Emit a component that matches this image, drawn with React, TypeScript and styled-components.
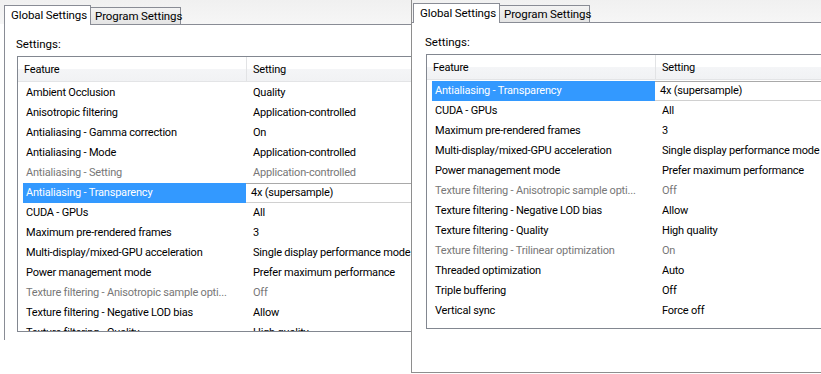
import styled, { createGlobalStyle } from "styled-components"

type SettingRow = {
  feature: string
  value: string
  disabled?: boolean
  selected?: boolean
}

const leftRows: SettingRow[] = [
  { feature: "Ambient Occlusion", value: "Quality" },
  { feature: "Anisotropic filtering", value: "Application-controlled" },
  { feature: "Antialiasing - Gamma correction", value: "On" },
  { feature: "Antialiasing - Mode", value: "Application-controlled" },
  { feature: "Antialiasing - Setting", value: "Application-controlled", disabled: true },
  { feature: "Antialiasing - Transparency", value: "4x (supersample)", selected: true },
  { feature: "CUDA - GPUs", value: "All" },
  { feature: "Maximum pre-rendered frames", value: "3" },
  { feature: "Multi-display/mixed-GPU acceleration", value: "Single display performance mode" },
  { feature: "Power management mode", value: "Prefer maximum performance" },
  { feature: "Texture filtering - Anisotropic sample opti...", value: "Off", disabled: true },
  { feature: "Texture filtering - Negative LOD bias", value: "Allow" },
  { feature: "Texture filtering - Quality", value: "High quality" },
]

const rightRows: SettingRow[] = [
  { feature: "Antialiasing - Transparency", value: "4x (supersample)", selected: true },
  { feature: "CUDA - GPUs", value: "All" },
  { feature: "Maximum pre-rendered frames", value: "3" },
  { feature: "Multi-display/mixed-GPU acceleration", value: "Single display performance mode" },
  { feature: "Power management mode", value: "Prefer maximum performance" },
  { feature: "Texture filtering - Anisotropic sample opti...", value: "Off", disabled: true },
  { feature: "Texture filtering - Negative LOD bias", value: "Allow" },
  { feature: "Texture filtering - Quality", value: "High quality" },
  { feature: "Texture filtering - Trilinear optimization", value: "On", disabled: true },
  { feature: "Threaded optimization", value: "Auto" },
  { feature: "Triple buffering", value: "Off" },
  { feature: "Vertical sync", value: "Force off" },
]

type SettingsWindowProps = {
  rows: SettingRow[]
  framed?: boolean
  left: number
  top: number
  width: number
  height: number
  listHeight: number
}

const SettingsWindow = ({ rows, framed, left, top, width, height, listHeight }: SettingsWindowProps) => (
  <Window $framed={framed} style={{ left, top, width, height }}>
    <TabStrip $framed={framed}>
      <Tab $active>Global Settings</Tab>
      <Tab>Program Settings</Tab>
    </TabStrip>
    <Panel $framed={framed}>
      <Label>Settings:</Label>
      <ListBox style={{ height: listHeight }}>
        <Header>
          <HeadCell $first>Feature</HeadCell>
          <HeadCell>Setting</HeadCell>
        </Header>
        {rows.map(row => (
          <Row key={row.feature}>
            <FeatureCell $selected={row.selected} $disabled={row.disabled}>
              {row.feature}
            </FeatureCell>
            <ValueCell $selected={row.selected} $disabled={row.disabled}>
              {row.value}
            </ValueCell>
          </Row>
        ))}
      </ListBox>
    </Panel>
  </Window>
)

const App = () => (
  <>
    <GlobalStyle />
    <Desktop>
      <SettingsWindow rows={leftRows} left={0} top={0} width={411} height={340} listHeight={276} />
      <SettingsWindow rows={rightRows} framed left={411} top={-2} width={420} height={375} listHeight={275} />
    </Desktop>
  </>
)
export default App

const GlobalStyle = createGlobalStyle`
  body {
    margin: 0;
    background: #fff;
    font-family: Roboto, "Noto Sans", "Liberation Sans", sans-serif;
    font-size: 11px;
    color: #000;
  }
`

const Desktop = styled.div`
  position: relative;
  width: 821px;
  height: 374px;
  overflow: hidden;
  background: #fff;
`

/* each screenshot is a window lying on the canvas */
const Window = styled.div<{ $framed?: boolean }>`
  position: absolute;
  box-sizing: border-box;
  display: flex;
  flex-direction: column;
  overflow: hidden;
  background: #fff;
  border-left: ${p => (p.$framed ? "1px solid #8e8e8e" : "none")};
  border-bottom: ${p => (p.$framed ? "1px solid #8e8e8e" : "none")};
`

const TabStrip = styled.div<{ $framed?: boolean }>`
  height: 24px;
  flex: 0 0 24px;
  display: flex;
  align-items: flex-end;
  padding-left: ${p => (p.$framed ? "1px" : "4px")};
  background: linear-gradient(to bottom, #f0f0f0, #f6f6f6);
`

const Tab = styled.div<{ $active?: boolean }>`
  box-sizing: border-box;
  position: relative;
  z-index: ${p => (p.$active ? 2 : 1)};
  width: ${p => (p.$active ? "87px" : "91px")};
  height: ${p => (p.$active ? "20px" : "17px")};
  margin-bottom: ${p => (p.$active ? "-1px" : "0")};
  margin-left: ${p => (p.$active ? "0" : "-1px")};
  padding-left: ${p => (p.$active ? "6px" : "4px")};
  padding-top: ${p => (p.$active ? "1px" : "0")};
  border: 1px solid #898c95;
  border-bottom: none;
  line-height: 16px;
  font-size: 11.5px;
  letter-spacing: -0.1px;
  white-space: nowrap;
  background: ${p =>
    p.$active ? "#fff" : "linear-gradient(to bottom, #f3f3f3, #e4e4e4)"};
`

const Panel = styled.div<{ $framed?: boolean }>`
  flex: 1;
  position: relative;
  z-index: 1;
  margin-left: ${p => (p.$framed ? "0" : "4px")};
  border-top: 1px solid #898c95;
  border-left: ${p => (p.$framed ? "none" : "1px solid #898c95")};
  padding: 12px 0 0 ${p => (p.$framed ? "13px" : "11px")};
  background: #fff;
`

const Label = styled.div`
  line-height: 14px;
  font-size: 11.5px;
`

const ListBox = styled.div`
  box-sizing: border-box;
  width: 440px;
  margin: 5px 0 0 1px;
  border: 1px solid #828790;
  overflow: hidden;
  background: #fff;
  letter-spacing: -0.2px;
`

const Header = styled.div`
  display: flex;
  height: 24px;
  margin-bottom: 1px;
  border-bottom: 1px solid #e3e4e6;
  background: linear-gradient(to bottom, #fff 0%, #fff 50%, #f4f5f7 51%, #f1f2f4 100%);
`

const HeadCell = styled.div<{ $first?: boolean }>`
  box-sizing: border-box;
  flex: ${p => (p.$first ? "0 0 229px" : "1")};
  padding-left: 6px;
  line-height: 25px;
  border-right: ${p => (p.$first ? "1px solid #e2e3e5" : "none")};
`

const Row = styled.div`
  display: flex;
  height: 20px;
  margin-left: 5px;
`

const FeatureCell = styled.div<{ $selected?: boolean; $disabled?: boolean }>`
  box-sizing: border-box;
  flex: 0 0 223px;
  padding-left: 3px;
  line-height: 20px;
  white-space: nowrap;
  overflow: hidden;
  color: ${p => (p.$selected ? "#fff" : p.$disabled ? "#777" : "#000")};
  background: ${p => (p.$selected ? "#3399ff" : "transparent")};
`

const ValueCell = styled.div<{ $selected?: boolean; $disabled?: boolean }>`
  box-sizing: border-box;
  flex: 1;
  padding-left: ${p => (p.$selected ? "5px" : "7px")};
  line-height: 20px;
  white-space: nowrap;
  color: ${p => (p.$disabled ? "#777" : "#000")};
  box-shadow: ${p => (p.$selected ? "inset 0 1px 0 #a9a9a9, inset 0 -1px 0 #d0d0d0" : "none")};
`
